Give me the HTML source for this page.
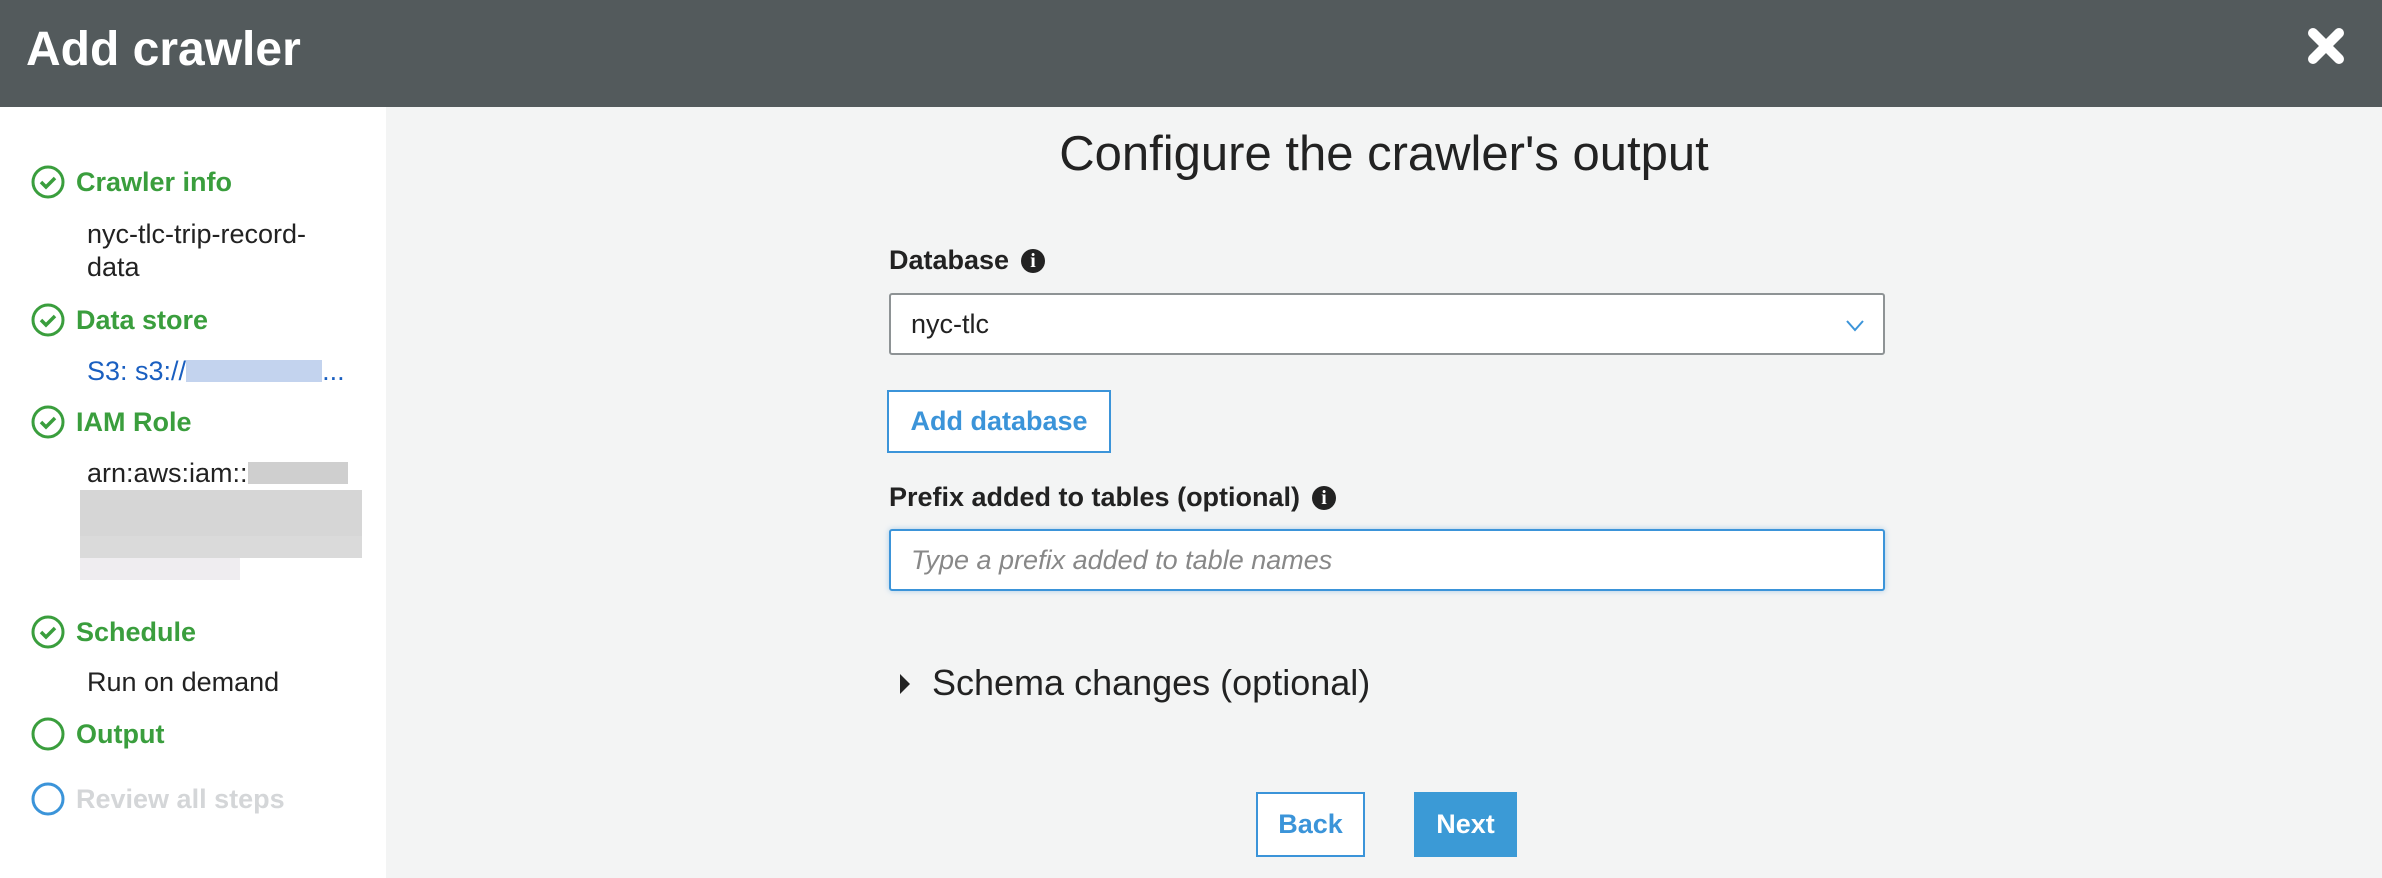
<!DOCTYPE html>
<html><head><meta charset="utf-8"><style>
*{margin:0;padding:0;box-sizing:border-box}
body{width:2382px;height:878px;overflow:hidden;background:#f3f4f4;font-family:"Liberation Sans",Arial,sans-serif;position:relative}
.hdr{position:absolute;left:0;top:0;width:2382px;height:107px;background:#535a5c}
.hdr h1{position:absolute;left:26px;top:22px;font-size:48px;font-weight:bold;color:#fff}
.side{position:absolute;left:0;top:107px;width:386px;height:771px;background:#fff}
.ab{position:absolute;white-space:nowrap}
.st{font-size:27px;font-weight:bold;color:#3a9e3d;left:76px;line-height:30px}
.sub{font-size:27px;color:#222;left:87px;line-height:33px}
.ic{position:absolute;left:31px;width:34px;height:34px}
.lbl{font-size:27px;font-weight:bold;color:#222;left:889px}
.info{display:inline-block;width:24px;height:24px;border-radius:50%;background:#222;color:#fff;font-family:"Liberation Serif",serif;font-weight:bold;font-size:20px;text-align:center;line-height:24px;vertical-align:2px;margin-left:12px}
.box{position:absolute;left:889px;width:996px;background:#fff}
.btn{position:absolute;font-weight:bold;font-size:27px;text-align:center}
</style></head><body>
<div class="hdr"><h1>Add crawler</h1>
<svg style="position:absolute;left:2305px;top:25px" width="42" height="42" viewBox="0 0 42 42"><path d="M8 8L34 34M34 8L8 34" stroke="#fff" stroke-width="10" stroke-linecap="round"/></svg>
</div>
<div class="side"></div>
<svg class="ic" style="top:165px" viewBox="0 0 34 34"><circle cx="17" cy="17" r="15" fill="none" stroke="#3a9e3d" stroke-width="3"/><path d="M10 17l5 5 9-9" fill="none" stroke="#3a9e3d" stroke-width="3.5"/></svg>
<div class="ab st" style="top:167px">Crawler info</div>
<div class="ab sub" style="top:218px">nyc-tlc-trip-record-<br>data</div>
<svg class="ic" style="top:303px" viewBox="0 0 34 34"><circle cx="17" cy="17" r="15" fill="none" stroke="#3a9e3d" stroke-width="3"/><path d="M10 17l5 5 9-9" fill="none" stroke="#3a9e3d" stroke-width="3.5"/></svg>
<div class="ab st" style="top:305px">Data store</div>
<div class="ab sub" style="top:355px;color:#1a5fc0">S3: s3://<span style="display:inline-block;width:136px;height:22px;background:#c3d3ee;vertical-align:-2px"></span>...</div>
<svg class="ic" style="top:405px" viewBox="0 0 34 34"><circle cx="17" cy="17" r="15" fill="none" stroke="#3a9e3d" stroke-width="3"/><path d="M10 17l5 5 9-9" fill="none" stroke="#3a9e3d" stroke-width="3.5"/></svg>
<div class="ab st" style="top:407px">IAM Role</div>
<div class="ab sub" style="top:457px">arn:aws:iam::<span style="display:inline-block;width:100px;height:22px;background:#cfcfcf;vertical-align:-2px"></span></div>
<div class="ab" style="left:80px;top:490px;width:282px;height:46px;background:#d6d6d6"></div>
<div class="ab" style="left:80px;top:536px;width:282px;height:22px;background:#dadada"></div>
<div class="ab" style="left:80px;top:558px;width:160px;height:22px;background:#efedf0"></div>
<svg class="ic" style="top:615px" viewBox="0 0 34 34"><circle cx="17" cy="17" r="15" fill="none" stroke="#3a9e3d" stroke-width="3"/><path d="M10 17l5 5 9-9" fill="none" stroke="#3a9e3d" stroke-width="3.5"/></svg>
<div class="ab st" style="top:617px">Schedule</div>
<div class="ab sub" style="top:666px">Run on demand</div>
<svg class="ic" style="top:717px" viewBox="0 0 34 34"><circle cx="17" cy="17" r="15" fill="none" stroke="#3a9e3d" stroke-width="3"/></svg>
<div class="ab st" style="top:719px">Output</div>
<svg class="ic" style="top:782px" viewBox="0 0 34 34"><circle cx="17" cy="17" r="15" fill="none" stroke="#3b94d9" stroke-width="3"/></svg>
<div class="ab st" style="top:784px;color:#d4d6d8">Review all steps</div>

<div class="ab" style="left:386px;width:1996px;top:126px;text-align:center;font-size:49px;color:#222">Configure the crawler's output</div>
<div class="ab lbl" style="top:245px">Database<span class="info">i</span></div>
<div class="box" style="top:293px;height:62px;border:2px solid #8e9395;border-radius:3px"><span class="ab" style="left:20px;top:14px;font-size:27px;color:#222">nyc-tlc</span>
<svg style="position:absolute;right:18px;top:24px" width="20" height="14" viewBox="0 0 20 14"><path d="M2 2l8 9 8-9" fill="none" stroke="#3b94d9" stroke-width="2"/></svg></div>
<div class="btn" style="left:887px;top:390px;width:224px;height:63px;border:2px solid #3b94d9;background:#fff;color:#3b94d9;line-height:59px">Add database</div>
<div class="ab lbl" style="top:482px">Prefix added to tables (optional)<span class="info">i</span></div>
<div class="box" style="top:529px;height:62px;border:2px solid #3b94d9;border-radius:3px;box-shadow:0 0 6px rgba(59,148,217,.4)"><span class="ab" style="left:20px;top:14px;font-size:27px;color:#888;font-style:italic">Type a prefix added to table names</span></div>
<svg class="ab" style="left:899px;top:673px" width="12" height="22" viewBox="0 0 12 22"><path d="M1 1L11 11 1 21z" fill="#222"/></svg>
<div class="ab" style="left:932px;top:662px;font-size:36px;color:#222">Schema changes (optional)</div>
<div class="btn" style="left:1256px;top:792px;width:109px;height:65px;border:2px solid #3b94d9;background:#fff;color:#3b94d9;line-height:61px">Back</div>
<div class="btn" style="left:1414px;top:792px;width:103px;height:65px;background:#3b9ad6;color:#fff;line-height:65px">Next</div>
</body></html>
